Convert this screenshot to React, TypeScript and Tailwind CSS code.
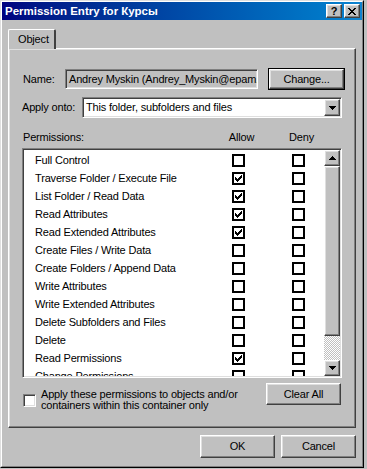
import React from "react";

const raised =
  "border border-t-white border-l-white border-r-[#404040] border-b-[#404040] shadow-[inset_-1px_-1px_#808080,inset_1px_1px_#dfdfdf]";
const sunken =
  "border border-t-[#808080] border-l-[#808080] border-r-white border-b-white shadow-[inset_1px_1px_#404040,inset_-1px_-1px_#dfdfdf]";

const perms: { label: string; allow: boolean }[] = [
  { label: "Full Control", allow: false },
  { label: "Traverse Folder / Execute File", allow: true },
  { label: "List Folder / Read Data", allow: true },
  { label: "Read Attributes", allow: true },
  { label: "Read Extended Attributes", allow: true },
  { label: "Create Files / Write Data", allow: false },
  { label: "Create Folders / Append Data", allow: false },
  { label: "Write Attributes", allow: false },
  { label: "Write Extended Attributes", allow: false },
  { label: "Delete Subfolders and Files", allow: false },
  { label: "Delete", allow: false },
  { label: "Read Permissions", allow: true },
  { label: "Change Permissions", allow: false },
];

function Check() {
  return (
    <svg width="7" height="7" viewBox="0 0 7 7" shapeRendering="crispEdges">
      <path
        d="M6 0h1v1h-1z M5 1h2v1h-2z M0 2h1v1h-1z M4 2h3v1h-3z M0 3h2v1h-2z M3 3h3v1h-3z M0 4h5v1h-5z M1 5h3v1h-3z M2 6h1v1h-1z"
        fill="#000"
      />
    </svg>
  );
}

function FlatBox({ checked }: { checked: boolean }) {
  return (
    <div className="w-[13px] h-[13px] border-2 border-black bg-white flex items-center justify-center shrink-0">
      {checked && <Check />}
    </div>
  );
}

function Arrow({ up }: { up?: boolean }) {
  return (
    <svg width="7" height="4" viewBox="0 0 7 4" shapeRendering="crispEdges" className={up ? "rotate-180" : ""}>
      <path d="M0 0h7v1h-7z M1 1h5v1h-5z M2 2h3v1h-3z M3 3h1v1h-1z" fill="#000" />
    </svg>
  );
}

function Button({ children, className = "" }: { children: React.ReactNode; className?: string }) {
  return (
    <div className={`${raised} bg-[#c0c0c0] w-[75px] flex items-center justify-center ${className}`}>
      {children}
    </div>
  );
}

export default function App() {
  return (
    <div className="w-[367px] h-[469px] bg-[#c0c0c0] overflow-hidden text-[11px] leading-[13px] tracking-[-0.17px] text-black font-['Liberation_Sans',Arial,sans-serif]">
      <div className="w-[364px] h-[468px] border border-t-[#dfdfdf] border-l-[#dfdfdf] border-r-black border-b-black">
        <div className="h-full border border-t-white border-l-white border-r-[#808080] border-b-[#808080] flex flex-col">
          {/* title bar */}
          <div className="h-[18px] bg-linear-to-r from-[#000080] to-[#1084d0] flex items-center pl-[3px] pr-[2px]">
            <span className="text-white font-bold text-[11.5px] tracking-[0px]">Permission Entry for Курсы</span>
            <div className={`${raised} ml-auto w-[16px] h-[14px] bg-[#c0c0c0] flex items-center justify-center font-bold text-[11px] leading-none`}>
              ?
            </div>
            <div className={`${raised} ml-[2px] w-[16px] h-[14px] bg-[#c0c0c0] flex items-center justify-center`}>
              <svg width="8" height="7" viewBox="0 0 8 7" shapeRendering="crispEdges">
                <path
                  d="M0 0h2v1h-2z M6 0h2v1h-2z M1 1h2v1h-2z M5 1h2v1h-2z M2 2h4v1h-4z M3 3h2v1h-2z M2 4h4v1h-4z M1 5h2v1h-2z M5 5h2v1h-2z M0 6h2v1h-2z M6 6h2v1h-2z"
                  fill="#000"
                />
              </svg>
            </div>
          </div>

          <div className="px-[6px] flex flex-col">
            {/* tab */}
            <div className="mt-[9px] flex">
              <div className="relative z-10 w-[48px] h-[20px] bg-[#c0c0c0] border-t border-l border-white border-r-2 border-r-[#404040] rounded-t-[2px] flex items-center pl-[9px]">
                Object
              </div>
            </div>

            {/* panel */}
            <div className={`${raised} -mt-[1px] h-[380px] bg-[#c0c0c0] flex flex-col pl-[14px]`}>
              <div className="mt-[19px] flex items-center h-[22px]">
                <span className="w-[42px]">Name:</span>
                <div className={`${sunken} w-[193px] h-[20px] overflow-hidden whitespace-nowrap flex items-center pl-[3px]`}>
                  Andrey Myskin (Andrey_Myskin@epam.
                </div>
                <div className="ml-[10px] border border-black">
                  <Button className="h-[20px] w-[73px]">Change...</Button>
                </div>
              </div>

              <div className="mt-[7px] flex items-center h-[21px] -ml-[1px]">
                <span className="w-[60px]">Apply onto:</span>
                <div className={`${sunken} w-[260px] h-[21px] bg-white flex items-center pl-[3px] pr-[1px]`}>
                  <span className="flex-1">This folder, subfolders and files</span>
                  <div className={`${raised} w-[16px] h-[17px] bg-[#c0c0c0] flex items-center justify-center`}>
                    <Arrow />
                  </div>
                </div>
              </div>

              <div className="mt-[13px] flex h-[13px]">
                <span className="w-[195px]">Permissions:</span>
                <span className="w-[47px] text-center">Allow</span>
                <span className="w-[73px] text-center">Deny</span>
              </div>

              <div className={`${sunken} -ml-[1px] mt-[4px] w-[320px] h-[230px] bg-white flex p-[1px]`}>
                <div className="flex-1 overflow-hidden pt-[1px]">
                  {perms.map((p) => (
                    <div key={p.label} className="h-[18px] flex items-center whitespace-nowrap">
                      <span className="w-[208px] pl-[11px] shrink-0">{p.label}</span>
                      <FlatBox checked={p.allow} />
                      <div className="w-[47px] shrink-0" />
                      <FlatBox checked={false} />
                    </div>
                  ))}
                </div>
                <div className="w-[16px] flex flex-col">
                  <div className={`${raised} h-[16px] bg-[#c0c0c0] flex items-center justify-center`}>
                    <Arrow up />
                  </div>
                  <div className={`${raised} h-[170px] bg-[#c0c0c0]`} />
                  <div className="flex-1 bg-[repeating-conic-gradient(#c0c0c0_0_25%,#fff_0_50%)] bg-[length:2px_2px]" />
                  <div className={`${raised} h-[16px] bg-[#c0c0c0] flex items-center justify-center`}>
                    <Arrow />
                  </div>
                </div>
              </div>

              <div className="mt-[5px] flex items-start">
                <div className="w-[243px] flex items-start">
                  <div className={`${sunken} mt-[11px] w-[13px] h-[13px] bg-white shrink-0`} />
                  <div className="ml-[5px] mt-[6px] leading-[11px]">
                    Apply these permissions to objects and/or
                    <br />
                    containers within this container only
                  </div>
                </div>
                <Button className="h-[22px]">Clear All</Button>
              </div>
            </div>

            {/* dialog buttons */}
            <div className="mt-[7px] flex justify-end gap-[6px]">
              <Button className="h-[23px]">OK</Button>
              <Button className="h-[23px]">Cancel</Button>
            </div>
          </div>
        </div>
      </div>
    </div>
  );
}
